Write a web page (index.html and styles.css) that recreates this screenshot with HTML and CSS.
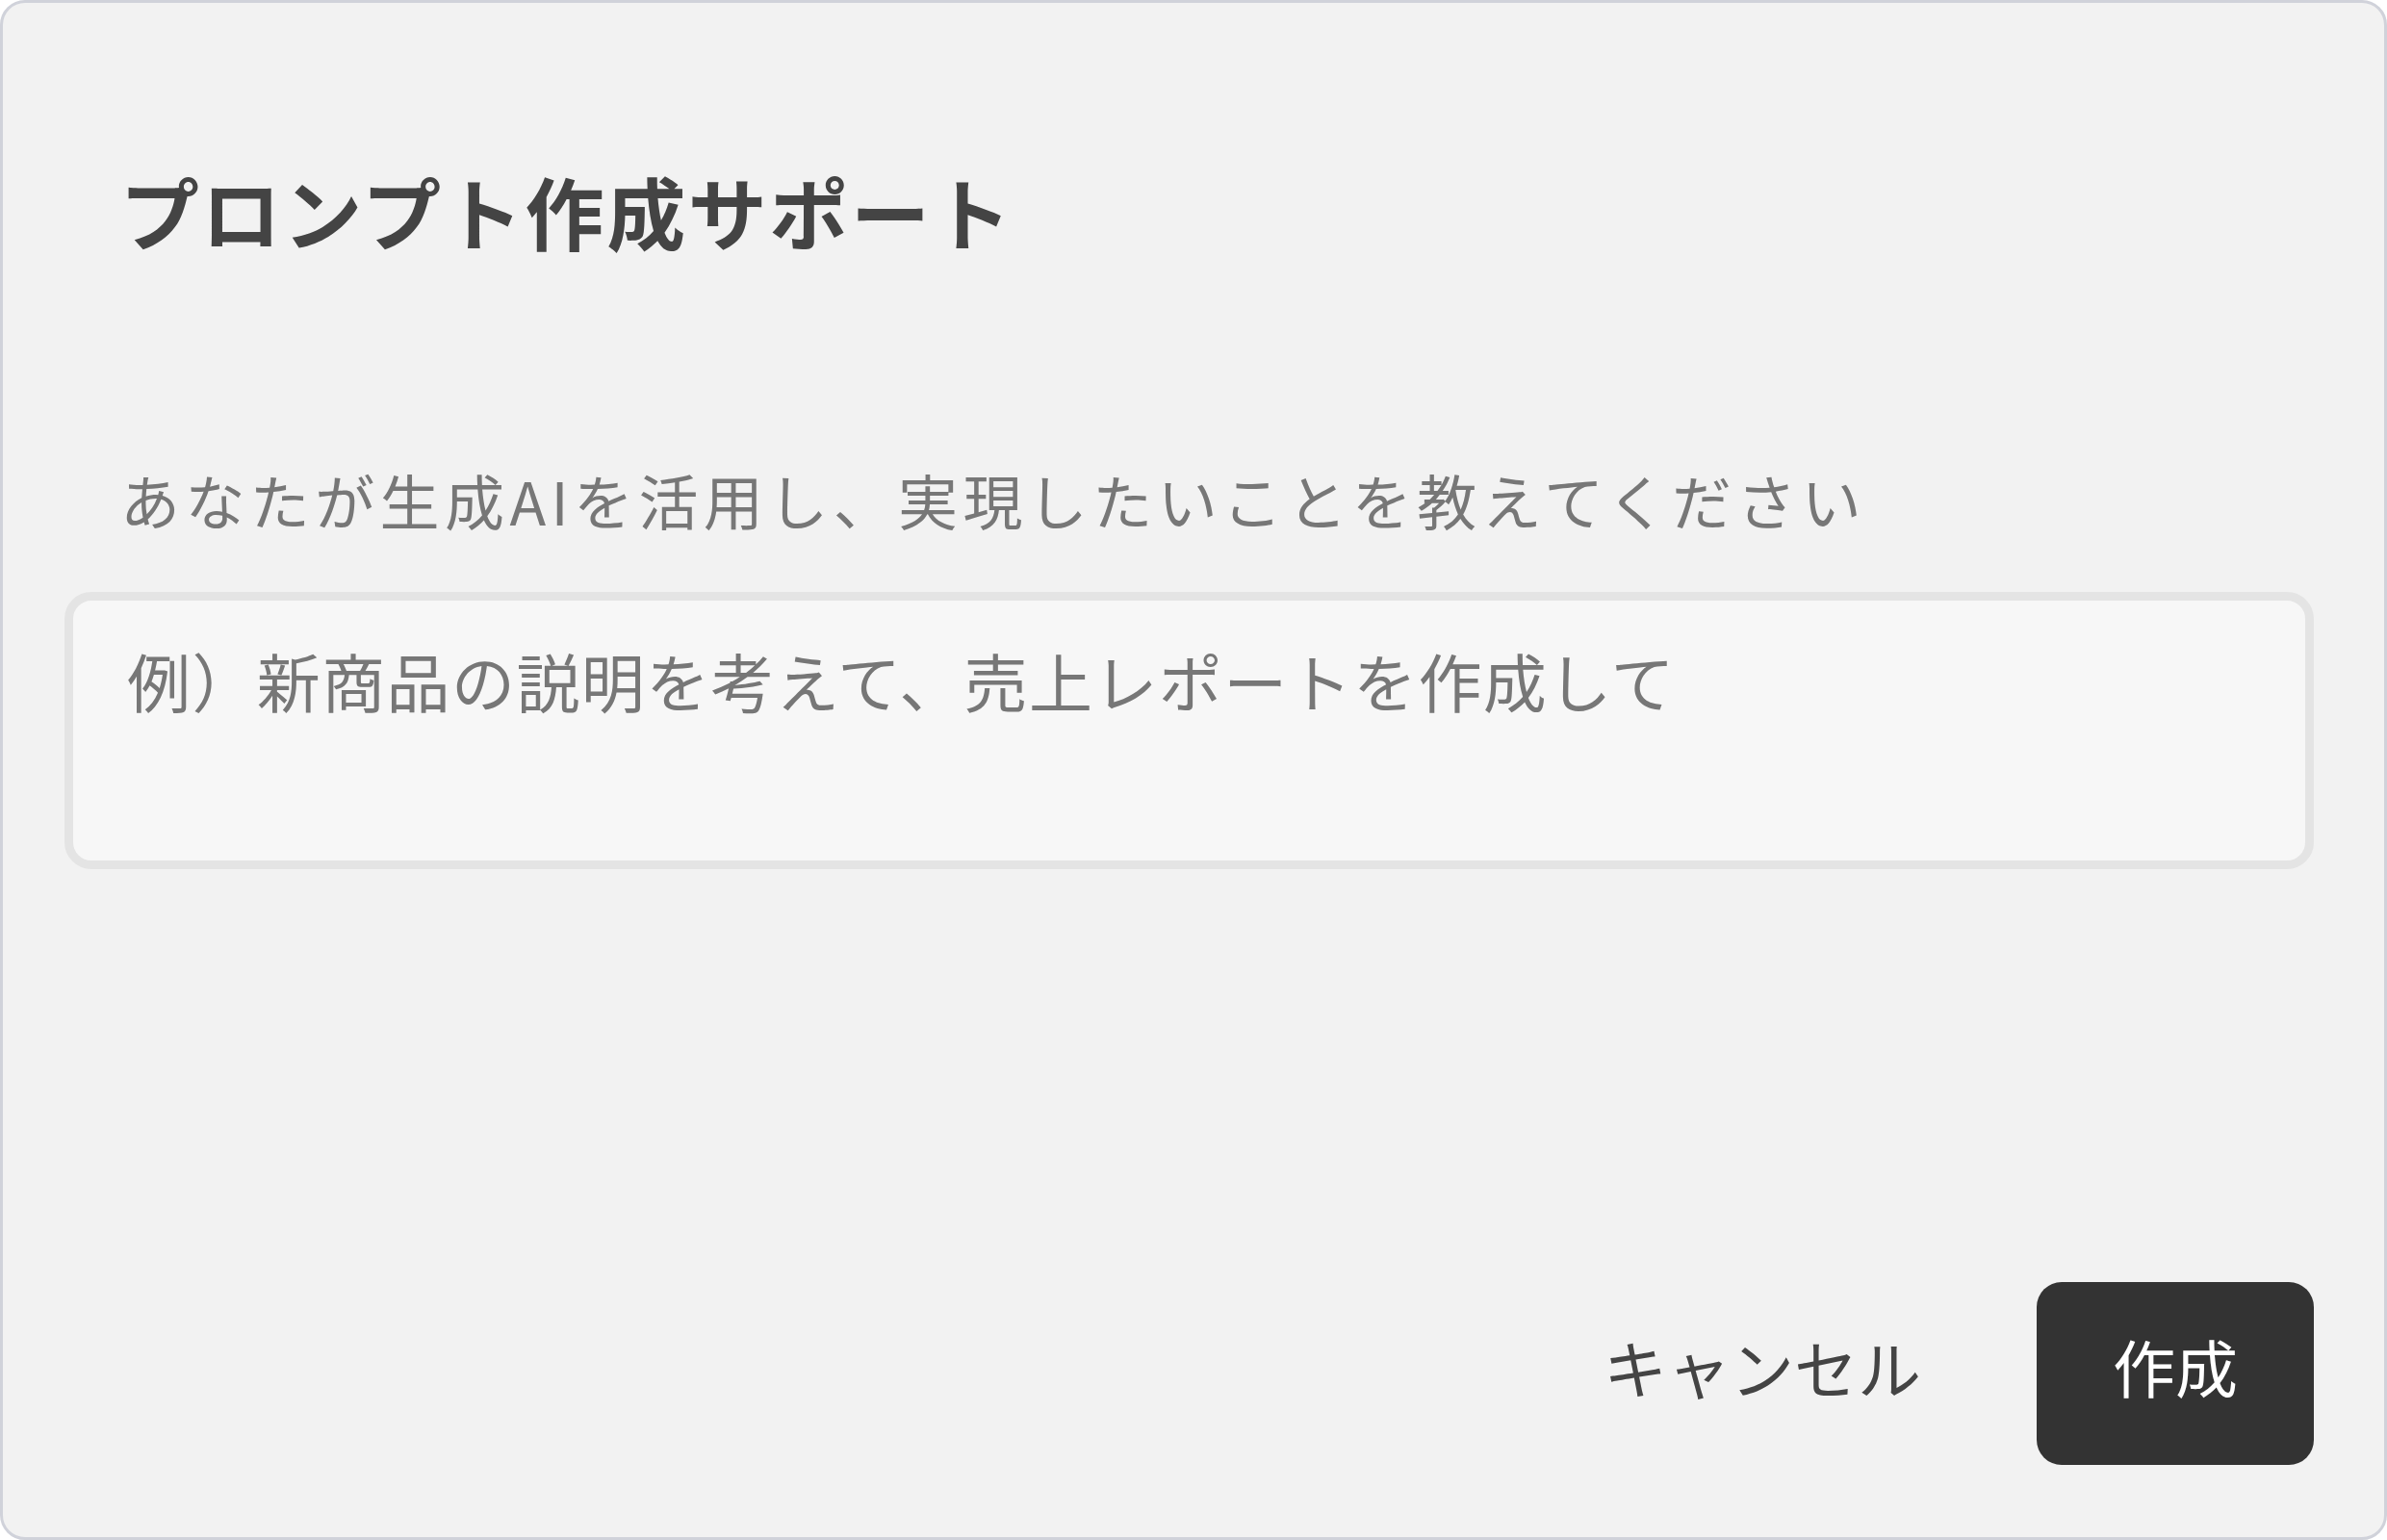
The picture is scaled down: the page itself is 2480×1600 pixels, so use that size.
FILE: index.html
```html
<!DOCTYPE html>
<html lang="ja">
<head>
    <meta charset="UTF-8">
    <meta name="viewport" content="width=device-width, initial-scale=1.0">
    <title>プロンプト作成サポート</title>
    <link rel="stylesheet" href="styles.css">
</head>
<body>
    <div class="dialog">
        <h2 class="dialog-title">プロンプト作成サポート</h2>

        <label class="field-label" for="prompt">あなたが生成AIを活用し、実現したいことを教えてください</label>
        <textarea id="prompt" class="field-input" placeholder="例）新商品の説明を考えて、売上レポートを作成して"></textarea>

        <div class="dialog-actions">
            <button class="btn-cancel">キャンセル</button>
            <button class="btn-primary">作成</button>
        </div>
    </div>
</body>
</html>
```

FILE: styles.css
```css
* {
    box-sizing: border-box;
}
body {
    font-family: "Noto Sans CJK JP", "Noto Sans", sans-serif;
    margin: 0;
    background-color: #ffffff;
}
.dialog {
    display: flex;
    flex-direction: column;
    height: 100vh;
    padding: 167px 73px 75px 64px;
    background: #f2f2f2;
    border: 3px solid #d0d2da;
    border-radius: 26px;
}
.dialog-title {
    margin: 0;
    padding-left: 58px;
    font-size: 82px;
    line-height: 1.2;
    font-weight: 700;
    letter-spacing: 2.6px;
    color: #444444;
}
.field-label {
    display: block;
    margin-top: 205px;
    padding-left: 58px;
    font-size: 62px;
    line-height: 1.5;
    letter-spacing: 5.4px;
    color: #777777;
}
.field-input {
    display: block;
    width: 100%;
    height: 288px;
    margin-top: 49px;
    padding: 33px 56px;
    font-family: inherit;
    font-size: 66px;
    line-height: 1.5;
    letter-spacing: 1.4px;
    color: #444444;
    background: #f7f7f7;
    border: 9px solid #e4e4e4;
    border-radius: 28px;
    resize: none;
    outline: none;
}
.field-input::placeholder {
    color: #777777;
}
.dialog-actions {
    display: flex;
    justify-content: flex-end;
    align-items: center;
    gap: 60px;
    margin-top: auto;
}
.btn-cancel {
    padding: 0 60px 16px;
    height: 190px;
    font-family: inherit;
    font-size: 66px;
    color: #444444;
    background: none;
    border: none;
    cursor: pointer;
}
.btn-primary {
    width: 288px;
    height: 190px;
    padding: 0 0 16px;
    font-family: inherit;
    font-size: 65px;
    color: #ffffff;
    background-color: #333333;
    border: none;
    border-radius: 26px;
    cursor: pointer;
}
```
